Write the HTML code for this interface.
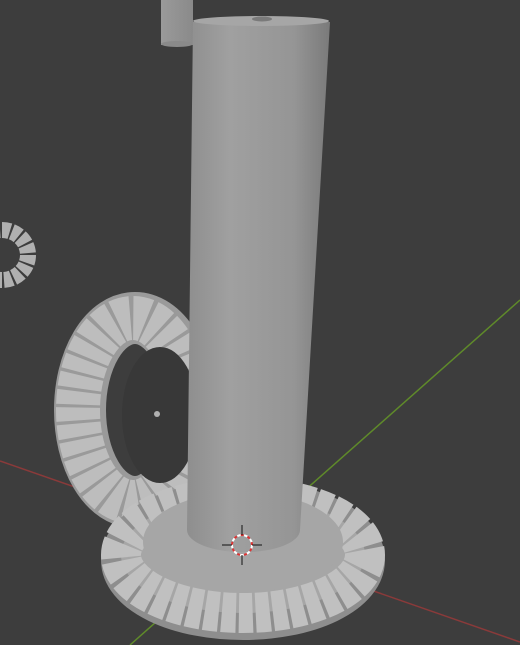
<!DOCTYPE html>
<html><head><meta charset="utf-8">
<style>html,body{margin:0;padding:0;background:#3d3d3d;width:520px;height:645px;overflow:hidden}</style>
</head><body>
<svg width="520" height="645" viewBox="0 0 520 645" xmlns="http://www.w3.org/2000/svg">
<defs>
<linearGradient id="cyl" x1="0" x2="1" y1="0" y2="0">
<stop offset="0" stop-color="#8e8e8e"/><stop offset="0.3" stop-color="#a0a0a0"/><stop offset="0.75" stop-color="#959595"/><stop offset="0.88" stop-color="#878787"/><stop offset="1" stop-color="#7a7a7a"/>
</linearGradient>
<linearGradient id="small" x1="0" x2="1"><stop offset="0" stop-color="#9a9a9a"/><stop offset="1" stop-color="#8a8a8a"/></linearGradient>
</defs>
<rect width="520" height="645" fill="#3d3d3d"/>
<line x1="0" y1="461" x2="520" y2="642" stroke="#8a3a3a" stroke-width="1.5"/>
<line x1="130" y1="645" x2="520" y2="300" stroke="#5f8a2a" stroke-width="1.5"/>
<rect x="161" y="0" width="32" height="45" fill="url(#small)"/>
<ellipse cx="177" cy="44" rx="16" ry="3" fill="#8a8a8a"/>
<ellipse cx="2" cy="255" rx="26" ry="25" fill="none" stroke="#b0b0b0" stroke-width="16" stroke-dasharray="8 2"/>
<!-- left tilted gear -->
<ellipse cx="135" cy="410" rx="55" ry="92" fill="none" stroke="#9a9a9a" stroke-width="52"/>
<ellipse cx="133" cy="410" rx="55" ry="92" fill="none" stroke="#bdbdbd" stroke-width="44" stroke-dasharray="13 3"/>
<ellipse cx="160" cy="415" rx="38" ry="68" fill="#383838"/>
<circle cx="157" cy="414" r="3" fill="#b0b0b0"/>
<!-- bottom gear -->
<ellipse cx="243" cy="560" rx="120" ry="58" fill="#a6a6a6" stroke="#8e8e8e" stroke-width="44"/>
<ellipse cx="243" cy="555" rx="122" ry="58" fill="#a6a6a6" stroke="#c0c0c0" stroke-width="40" stroke-dasharray="14 3"/>
<ellipse cx="243" cy="542" rx="100" ry="50" fill="#a6a6a6"/>
<!-- main cylinder -->
<path d="M193,22 L330,22 L300,530 A56,22 0 0 1 187,530 Z" fill="url(#cyl)"/>
<ellipse cx="261" cy="21" rx="68" ry="5" fill="#a6a6a6"/>
<ellipse cx="262" cy="19" rx="10" ry="2.5" fill="#7a7a7a"/>
<circle cx="242" cy="545" r="10" fill="none" stroke="#fff" stroke-width="2" stroke-dasharray="4 3"/>
<circle cx="242" cy="545" r="10" fill="none" stroke="#d33" stroke-width="2" stroke-dasharray="3 4" stroke-dashoffset="3.5"/>
<g stroke="#111" stroke-width="1"><line x1="222" y1="545" x2="232" y2="545"/><line x1="252" y1="545" x2="262" y2="545"/><line x1="242" y1="525" x2="242" y2="535"/><line x1="242" y1="555" x2="242" y2="565"/></g>
</svg>
</body></html>
